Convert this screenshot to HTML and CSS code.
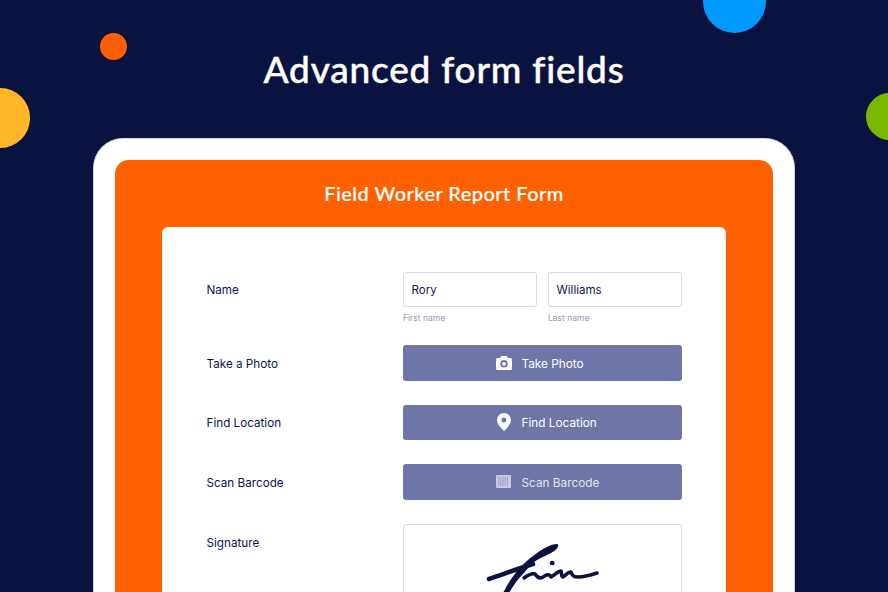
FILE: index.html
```html
<!DOCTYPE html>
<html lang="en">
<head>
<meta charset="utf-8">
<title>Advanced form fields</title>
<link rel="stylesheet" href="styles.css">
</head>
<body>
<div class="dot dot-orange"></div>
<div class="dot dot-yellow"></div>
<div class="dot dot-blue"></div>
<div class="dot dot-green"></div>
<h1 class="title">Advanced form fields</h1>
<div class="device">
  <div class="panel">
    <h2 class="form-title">Field Worker Report Form</h2>
    <div class="card">
      <div class="row row-name">
        <div class="label">Name</div>
        <div class="pair">
          <div class="field"><div class="input">Rory</div><div class="hint">First name</div></div>
          <div class="field"><div class="input">Williams</div><div class="hint">Last name</div></div>
        </div>
      </div>
      <div class="row">
        <div class="label">Take a Photo</div>
        <div class="btn">
          <span class="slot"><svg width="16" height="14" viewBox="0 0 16 14"><path fill="#fff" fill-rule="evenodd" d="M5.200 0h5.600l1.100 2H14.500A1.500 1.500 0 0 1 16 3.500V12.500A1.500 1.500 0 0 1 14.500 14H1.500A1.500 1.500 0 0 1 0 12.500V3.500A1.500 1.500 0 0 1 1.500 2H4.100ZM8 4a3.800 3.800 0 1 0 0 7.600A3.800 3.800 0 0 0 8 4ZM8 5.900a1.900 1.900 0 1 1 0 3.800A1.900 1.900 0 0 1 8 5.900Z"/></svg></span>
          <span class="btn-text">Take Photo</span>
        </div>
      </div>
      <div class="row">
        <div class="label">Find Location</div>
        <div class="btn">
          <span class="slot"><svg width="14" height="18" viewBox="0 0 14 18"><path fill="#fff" fill-rule="evenodd" d="M7 0a7 7 0 0 1 7 7c0 4-4 8-7 11C4 15 0 11 0 7a7 7 0 0 1 7-7ZM7 4.500a2.500 2.500 0 1 0 0 5 2.500 2.500 0 0 0 0-5Z"/></svg></span>
          <span class="btn-text">Find Location</span>
        </div>
      </div>
      <div class="row">
        <div class="label">Scan Barcode</div>
        <div class="btn btn-muted">
          <span class="slot"><svg width="15" height="13" viewBox="0 0 15 13"><rect width="15" height="13" rx="1" fill="#c8cadd"/><path stroke="#999cbe" stroke-width="0.800" d="M2.500 2v9M4.300 2v9M6.100 2v9M7.900 2v9M9.700 2v9M11.500 2v9"/></svg></span>
          <span class="btn-text">Scan Barcode</span>
        </div>
      </div>
      <div class="row row-sign">
        <div class="label">Signature</div>
        <div class="sign">
          <svg class="sig" width="120" height="68" viewBox="0 0 120 68"><path fill="#0a1240" d="M20 68C28 52 38 40 50 31C58 25 67 19 74 19C77 20 74 25 68 28C60 32 52 35 47 41C40 49 31 58 25 70Z"/><g fill="none" stroke="#0a1240" stroke-linecap="round" stroke-linejoin="round"><path stroke-width="4.500" d="M6 54C18 50 34 44 50 39"/><path stroke-width="3.500" d="M41 53C45 50 49 48 52 49C54 52 57 54 60 52C63 50 66 48 68 52C72 50 75 46 78 46C79 49 78 52 80 52C83 50 85 47 88 47C89 51 91 52 95 52C102 52 108 50 114 48"/><path stroke-width="4.500" d="M69 38h.4"/></g></svg>
        </div>
      </div>
    </div>
  </div>
</div>
</body>
</html>
```
FILE: styles.css
```css
* { box-sizing: border-box; }
html, body { margin: 0; padding: 0; }
body {
  width: 888px;
  height: 592px;
  overflow: hidden;
  position: relative;
  background: #0a1240;
  font-family: "Inter", "Liberation Sans", sans-serif;
}
.dot { position: absolute; border-radius: 50%; }
.dot-orange { left: 100px; top: 33px; width: 27px; height: 27px; background: #ff6100; }
.dot-yellow { left: -30px; top: 88px; width: 59.500px; height: 59.500px; background: #ffb629; }
.dot-blue { left: 703px; top: -30px; width: 63px; height: 63px; background: #0099ff; }
.dot-green { left: 866px; top: 93px; width: 47px; height: 47px; background: #7ab800; }
.title {
  margin: 0;
  height: 138px;
  padding-top: 46px;
  text-align: center;
  color: #fff;
  font-family: "Lato", sans-serif;
  font-size: 37px;
  font-weight: 500;
  line-height: 46px;
  letter-spacing: 0.8px;
  -webkit-text-stroke: 0.45px #fff;
}
.device {
  width: 702px;
  height: 454px;
  margin-left: 93px;
  padding: 21px 21px 0;
  background: #fff;
  border: 1.500px solid #cfd3f0;
  border-bottom: 0;
  border-radius: 30px 30px 0 0;
}
.panel {
  height: 433px;
  background: #ff6100;
  border-radius: 14px 14px 0 0;
  padding: 0 47px;
}
.form-title {
  margin: 0;
  height: 67px;
  text-align: center;
  color: #fff;
  font-family: "Lato", sans-serif;
  font-size: 20px;
  font-weight: 500;
  line-height: 67px;
  letter-spacing: 0.45px;
  -webkit-text-stroke: 0.2px #fff;
}
.card {
  background: #fff;
  border-radius: 6px 6px 0 0;
  height: 365px;
  padding: 45px 44px 0;
  display: flex;
  flex-direction: column;
  gap: 24px;
}
.row { display: flex; align-items: center; height: 35.500px; flex: none; }
.row-name { height: 49px; align-items: flex-start; }
.label {
  width: 197px;
  flex: none;
  padding: 3px 0 0 0.500px;
  color: #0a1551;
  font-size: 11.700px;
  line-height: 35px;
}
.row-name .label { padding-top: 1px; }
.row-sign .label { padding-top: 2px; }
.pair { display: flex; gap: 11px; }
.field { width: 134px; }
.input {
  height: 35px;
  padding-left: 7.500px;
  border: 1px solid #d5d8ee;
  border-radius: 3px;
  color: #0a1551;
  font-size: 11.500px;
  line-height: 34px;
}
.hint { margin-top: 5px; color: #9799b5; font-size: 8.500px; line-height: 12px; }
.btn {
  width: 279px;
  height: 35.500px;
  display: flex;
  align-items: center;
  padding-left: 92px;
  gap: 9.500px;
  background: #6f76a7;
  border-radius: 3px;
  color: #fff;
  font-size: 11.800px;
  font-weight: 400;
}
.btn-text { padding-top: 2px; }
.btn-muted { color: #e4e5ef; }
.slot { width: 17px; flex: none; display: flex; justify-content: center; }
.row-sign { height: 68px; align-items: flex-start; }
.sign {
  width: 279px;
  height: 68px;
  border: 1px solid #d5d8ee;
  border-bottom: 0;
  border-radius: 3px 3px 0 0;
  display: flex;
  justify-content: center;
}
.sig { flex: none; }
```
